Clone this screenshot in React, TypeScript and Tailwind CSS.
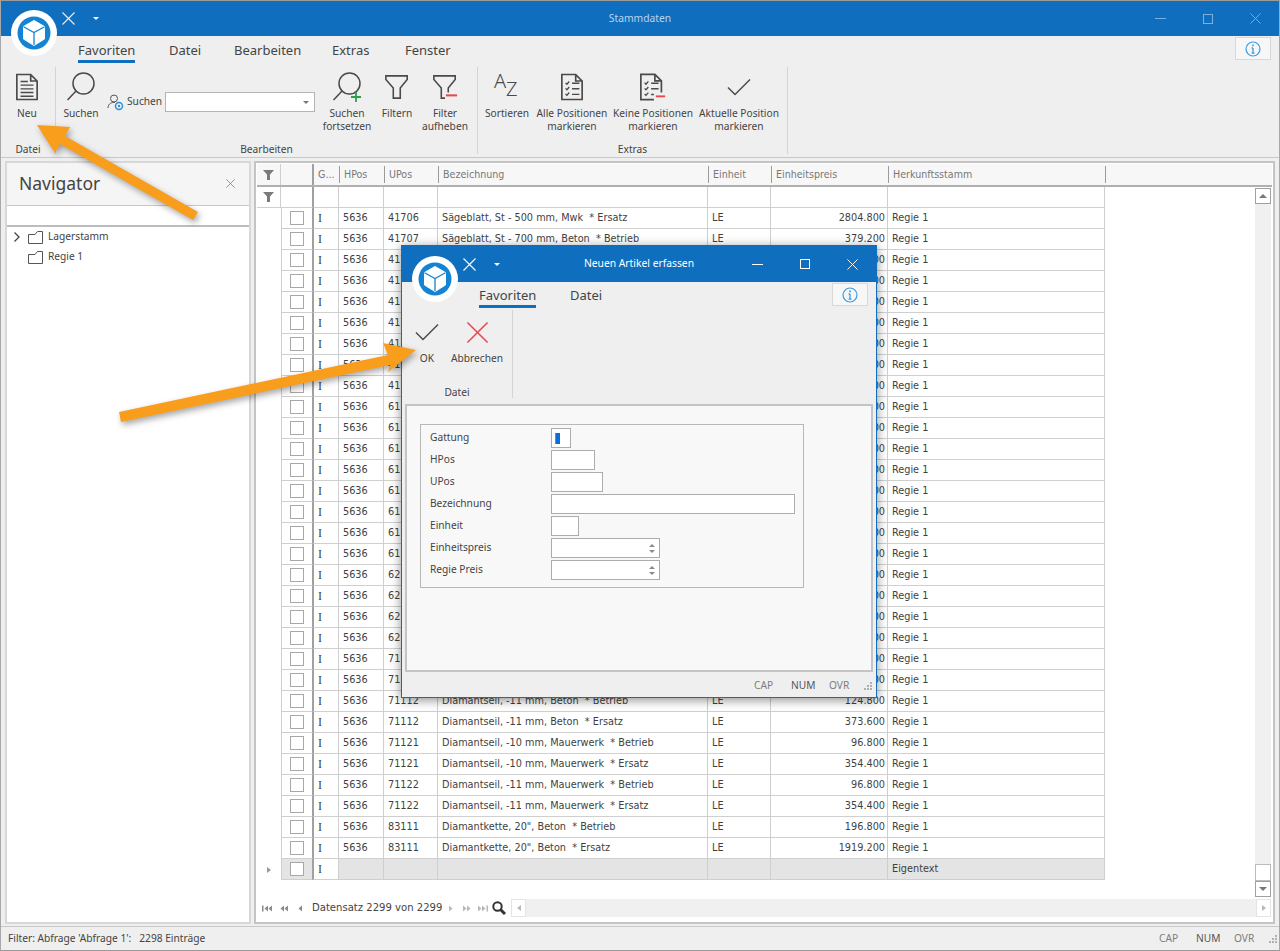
import type { ReactNode } from "react"

const ui = "font-['Noto_Sans',sans-serif]"
const gridFont = "font-['DejaVu_Sans_Condensed','DejaVu_Sans',sans-serif]"

type Row = { upos: string; name: string; price: string }

const rows: Row[] = [
 { upos: "41706", name: "Sägeblatt, St - 500 mm, Mwk  * Ersatz", price: "2804.800" },
 { upos: "41707", name: "Sägeblatt, St - 700 mm, Beton  * Betrieb", price: "379.200" },
 { upos: "41707", name: "Sägeblatt, St - 700 mm, Beton  * Ersatz", price: "3312.000" },
 { upos: "41708", name: "Sägeblatt, St - 700 mm, Mwk  * Betrieb", price: "379.200" },
 { upos: "41708", name: "Sägeblatt, St - 700 mm, Mwk  * Ersatz", price: "3312.000" },
 { upos: "41709", name: "Sägeblatt, St - 900 mm, Beton  * Betrieb", price: "504.800" },
 { upos: "41709", name: "Sägeblatt, St - 900 mm, Beton  * Ersatz", price: "4416.000" },
 { upos: "41710", name: "Sägeblatt, St - 900 mm, Mwk  * Betrieb", price: "504.800" },
 { upos: "41710", name: "Sägeblatt, St - 900 mm, Mwk  * Ersatz", price: "4416.000" },
 { upos: "61101", name: "Bohrkrone, 50 mm, Beton  * Betrieb", price: "44.800" },
 { upos: "61101", name: "Bohrkrone, 50 mm, Beton  * Ersatz", price: "128.000" },
 { upos: "61102", name: "Bohrkrone, 80 mm, Beton  * Betrieb", price: "62.400" },
 { upos: "61102", name: "Bohrkrone, 80 mm, Beton  * Ersatz", price: "176.000" },
 { upos: "61103", name: "Bohrkrone, 100 mm, Beton  * Betrieb", price: "78.400" },
 { upos: "61103", name: "Bohrkrone, 100 mm, Beton  * Ersatz", price: "232.000" },
 { upos: "61104", name: "Bohrkrone, 150 mm, Beton  * Betrieb", price: "104.800" },
 { upos: "61104", name: "Bohrkrone, 150 mm, Beton  * Ersatz", price: "304.000" },
 { upos: "62101", name: "Bohrkrone, 200 mm, Beton  * Betrieb", price: "136.800" },
 { upos: "62101", name: "Bohrkrone, 200 mm, Beton  * Ersatz", price: "392.000" },
 { upos: "62102", name: "Bohrkrone, 250 mm, Beton  * Betrieb", price: "168.800" },
 { upos: "62102", name: "Bohrkrone, 250 mm, Beton  * Ersatz", price: "488.000" },
 { upos: "71111", name: "Diamantseil, -10 mm, Beton  * Betrieb", price: "116.800" },
 { upos: "71111", name: "Diamantseil, -10 mm, Beton  * Ersatz", price: "352.000" },
 { upos: "71112", name: "Diamantseil, -11 mm, Beton  * Betrieb", price: "124.800" },
 { upos: "71112", name: "Diamantseil, -11 mm, Beton  * Ersatz", price: "373.600" },
 { upos: "71121", name: "Diamantseil, -10 mm, Mauerwerk  * Betrieb", price: "96.800" },
 { upos: "71121", name: "Diamantseil, -10 mm, Mauerwerk  * Ersatz", price: "354.400" },
 { upos: "71122", name: "Diamantseil, -11 mm, Mauerwerk  * Betrieb", price: "96.800" },
 { upos: "71122", name: "Diamantseil, -11 mm, Mauerwerk  * Ersatz", price: "354.400" },
 { upos: "83111", name: "Diamantkette, 20\", Beton  * Betrieb", price: "196.800" },
 { upos: "83111", name: "Diamantkette, 20\", Beton  * Ersatz", price: "1919.200" }
]

const Logo = () => (
 <svg width="46" height="46" viewBox="0 0 46 46">
  <circle cx="23" cy="23" r="23" fill="#ffffff" />
  <circle cx="23" cy="23" r="16.5" fill="#1583d3" />
  <path d="M23 10.5 L33.5 16.5 V29 L23 35.5 L12.5 29 V16.5 Z" fill="#ffffff" stroke="#ffffff" strokeLinejoin="round" />
  <path d="M12.5 16.8 L23 22.5 L33.5 16.8 M23 22.5 V35" fill="none" stroke="#1583d3" strokeWidth="1.3" />
 </svg>
)

const CloseGlyph = ({ color = "#ffffff", size = 13 }: { color?: string; size?: number }) => (
 <svg width={size} height={size} viewBox="0 0 13 13" stroke={color} strokeWidth="1.1" fill="none">
  <path d="M0.5 0.5 L12.5 12.5 M12.5 0.5 L0.5 12.5" />
 </svg>
)

const Caret = () => <span className="w-0 h-0 border-x-[3.5px] border-x-transparent border-t-[3px] border-t-white" />

const Doc = ({ children }: { children: ReactNode }) => (
 <svg width="24" height="28" viewBox="0 0 26 30" fill="none" stroke="#4a4a4a" strokeWidth="1.8">
  <path d="M2 1.5 H17 L24 8.5 V28.5 H2 Z M17 1.5 V8.5 H24" />
  {children}
 </svg>
)

const NewIcon = () => (
 <Doc>
  <path d="M6 9 H14 M6 13 H20 M6 17 H20 M6 21 H20 M6 25 H20" strokeWidth="1.5" />
 </Doc>
)

const checks = "M6 10.5 l1.5 1.5 l2.5 -3 M6 16.5 l1.5 1.5 l2.5 -3 M6 22.5 l1.5 1.5 l2.5 -3"

const CheckAllIcon = () => (
 <Doc>
  <path d={checks} strokeWidth="1.4" />
  <path d="M13 11 H21 M13 17 H21 M13 23 H21" strokeWidth="1.6" />
 </Doc>
)

const CheckNoneIcon = () => (
 <svg width="28" height="28" viewBox="0 0 30 30" fill="none" stroke="#4a4a4a" strokeWidth="1.8">
  <path d="M24 21 V8.5 L17 1.5 H2 V28.5 H16 M17 1.5 V8.5 H24" />
  <path d={checks} strokeWidth="1.4" />
  <path d="M13 11 H21 M13 17 H21 M13 23 H16" strokeWidth="1.6" />
  <path d="M18 25 H28" stroke="#e8474c" strokeWidth="2" />
 </svg>
)

const SearchIcon = ({ plus = false }: { plus?: boolean }) => (
 <svg width="30" height="30" viewBox="0 0 30 30" fill="none" stroke="#4a4a4a" strokeWidth="1.5">
  <circle cx="17.5" cy="11.5" r="10.5" />
  <path d="M10.5 18.5 L1.5 28" />
  {plus && <path d="M24 20 V30 M19 25 H29" stroke="#2f9e4f" strokeWidth="1.8" />}
 </svg>
)

const FilterIcon = ({ minus = false }: { minus?: boolean }) => (
 <svg width="26" height="26" viewBox="0 0 28 28" fill="none" stroke="#4a4a4a" strokeWidth="1.7">
  {minus ? (
   <>
    <path d="M17.5 20 V15 L25 6 V2 H2 V6 L10 15 V26 H14" />
    <path d="M15 23 H27" stroke="#e8474c" strokeWidth="2.2" />
   </>
  ) : (
   <path d="M2 2 H25 V6 L17.5 15 V26 H10 V15 L2 6 Z" />
  )}
 </svg>
)

const SortIcon = () => (
 <div className={`relative w-[26px] h-[26px] text-[#4a4a4a] ${ui}`}>
  <span className="absolute left-0 top-[-5px] text-[20px] leading-[24px] font-light">A</span>
  <span className="absolute left-[12px] top-[3px] text-[20px] leading-[24px] font-light">Z</span>
 </div>
)

const CheckIcon = ({ width = 24 }: { width?: number }) => (
 <svg width={width} height={width * 0.75} viewBox="0 0 24 18" fill="none" stroke="#4a4a4a" strokeWidth="1.5">
  <path d="M1 9.5 L8 16.5 L23 1.5" />
 </svg>
)

const CancelIcon = () => (
 <svg width="23" height="23" viewBox="0 0 24 24" fill="none" stroke="#e8474c" strokeWidth="1.6">
  <path d="M1.5 1.5 L22.5 22.5 M22.5 1.5 L1.5 22.5" />
 </svg>
)

const InfoIcon = () => (
 <svg width="16" height="16" viewBox="0 0 16 16" fill="none" stroke="#3b9be0" strokeWidth="1.2">
  <circle cx="8" cy="8" r="7" />
  <path d="M8 7 V12.2 M6.6 12.2 H9.6 M6.6 7 H8" strokeWidth="1.3" />
  <path d="M8 3.6 V5.2" strokeWidth="1.6" />
 </svg>
)

const Folder = () => (
 <svg width="15" height="13" viewBox="0 0 15 13" fill="none" stroke="#555555" strokeWidth="1">
  <path d="M0.5 3.5 H7 L9.5 0.5 H14.5 V12.5 H0.5 Z" />
 </svg>
)

const Funnel = () => (
 <svg width="11" height="10" viewBox="0 0 11 10" fill="#7a7a7a">
  <path d="M0 0 H11 L7 4.5 V10 H4 V4.5 Z" />
 </svg>
)

// pager arrows: n triangles with an optional end bar
const Pager = ({ back, n, bar, color, className }: { back?: boolean; n: number; bar?: boolean; color: string; className?: string }) => {
 const width = n * 4 + (bar ? 2 : 0)
 return (
  <svg width={width} height="7" viewBox={`0 0 ${width} 7`} fill={color} className={`shrink-0 ${back ? "-scale-x-100" : ""} ${className ?? ""}`}>
   {Array.from({ length: n }).map((_, i) => (
    <path key={i} d={`M${i * 4} 0.5 L${i * 4 + 3.5} 3.5 L${i * 4} 6.5 Z`} />
   ))}
   {bar && <rect x={width - 1.5} y="0.5" width="1.5" height="6" />}
  </svg>
 )
}

const TitleBar = ({ title, dim }: { title: string; dim?: boolean }) => {
 const glyph = dim ? "#7fb0dd" : "#ffffff"
 return (
  <div className={`grid grid-cols-[1fr_auto_1fr] items-center shrink-0 bg-[#106ebe] ${dim ? "h-[35px]" : "h-[36px]"} ${ui}`}>
   <div className="flex items-center pl-[61px] gap-[18px]">
    <CloseGlyph color={dim ? "#e6f0f9" : "#ffffff"} />
    <Caret />
   </div>
   <span className={`text-[10.3px] ${dim ? "text-[#b9d3ec]" : "text-white"}`}>{title}</span>
   <div className={`flex items-center justify-end ${dim ? "gap-[37px] pr-[18px]" : "gap-[37px] pr-[18px]"}`}>
    <span className="w-[11px] h-px" style={{ backgroundColor: glyph }} />
    <span className="w-[10px] h-[10px] border" style={{ borderColor: glyph }} />
    <CloseGlyph color={glyph} size={11} />
   </div>
  </div>
 )
}

const Tabs = ({ tabs, offset, tall }: { tabs: { label: string; w: number }[]; offset: string; tall?: boolean }) => (
 <div className={`relative flex items-start shrink-0 text-[13px] text-[#444444] ${tall ? "h-[28px] pt-[5px]" : "h-[27px] pt-[4px]"} ${ui} ${offset}`}>
  {tabs.map((t, i) => (
   <div key={t.label} style={{ width: t.w }}>
    <span className={`inline-block leading-[19px] ${i === 0 ? "border-b-[3px] border-[#106ebe]" : ""}`}>{t.label}</span>
   </div>
  ))}
  <div className={`absolute right-[8px] w-[36px] h-[23px] flex items-center justify-center bg-[#f7f7f7] border border-[#d8d8d8] ${tall ? "top-[1px]" : "top-px"}`}>
   <InfoIcon />
  </div>
 </div>
)

const RibbonButton = ({ w, icon, label }: { w: number; icon: ReactNode; label: ReactNode }) => (
 <div className="flex flex-col items-center shrink-0" style={{ width: w }}>
  <div className="h-[40px] flex items-center justify-center">{icon}</div>
  <div className="text-center leading-[13px] whitespace-nowrap">{label}</div>
 </div>
)

const Group = ({ w, label, children }: { w: number; label: string; children: ReactNode }) => (
 <div className="flex flex-col h-[87px] border-r border-[#d4d4d4] shrink-0" style={{ width: w }}>
  <div className="flex">{children}</div>
  <div className="mt-auto mb-[-2px] text-center leading-[13px]">{label}</div>
 </div>
)

const Ribbon = () => (
 <div className={`flex h-[94px] pt-[3px] shrink-0 border-b border-[#c8c8c8] text-[10.2px] text-[#444444] ${ui}`}>
  <Group w={55} label="Datei">
   <RibbonButton w={52} icon={<NewIcon />} label="Neu" />
  </Group>
  <Group w={422} label="Bearbeiten">
   <RibbonButton w={50} icon={<SearchIcon />} label="Suchen" />
   <div className="w-[216px] shrink-0 flex items-center h-[20px] mt-[25px] pl-[1px]">
    <svg width="17" height="17" viewBox="0 0 17 17" fill="none" stroke="#555555" strokeWidth="1">
     <circle cx="7" cy="4.5" r="3.5" />
     <path d="M1 14 C1 9.5 5 8 8 8.5" />
     <circle cx="12" cy="12" r="3.5" stroke="#2f8fd8" strokeWidth="1.5" />
     <circle cx="12" cy="12" r="1.2" fill="#2f8fd8" stroke="none" />
    </svg>
    <span className="ml-[3px] w-[38px]">Suchen</span>
    <div className="w-[150px] h-[20px] bg-white border border-[#b4b4b4] flex items-center justify-end pr-[5px]">
     <span className="w-0 h-0 border-x-[3px] border-x-transparent border-t-[3px] border-t-[#777777]" />
    </div>
   </div>
   <RibbonButton w={50} icon={<SearchIcon plus />} label={<>Suchen<br />fortsetzen</>} />
   <RibbonButton w={50} icon={<FilterIcon />} label="Filtern" />
   <RibbonButton w={46} icon={<FilterIcon minus />} label={<>Filter<br />aufheben</>} />
  </Group>
  <Group w={310} label="Extras">
   <div className="w-[4px]" />
   <RibbonButton w={50} icon={<SortIcon />} label="Sortieren" />
   <RibbonButton w={80} icon={<CheckAllIcon />} label={<>Alle Positionen<br />markieren</>} />
   <RibbonButton w={82} icon={<CheckNoneIcon />} label={<>Keine Positionen<br />markieren</>} />
   <RibbonButton w={90} icon={<CheckIcon />} label={<>Aktuelle Position<br />markieren</>} />
  </Group>
 </div>
)

const columns = [
 { label: "G...", w: "w-[27px]" },
 { label: "HPos", w: "w-[45px]" },
 { label: "UPos", w: "w-[54px]" },
 { label: "Bezeichnung", w: "w-[270px]" },
 { label: "Einheit", w: "w-[63px]" },
 { label: "Einheitspreis", w: "w-[117px]" },
 { label: "Herkunftsstamm", w: "w-[217px]" }
]

const cell = "h-full shrink-0 border-r border-b border-[#cfcfcf] px-[4px] flex items-center whitespace-nowrap overflow-hidden"

const CheckCell = ({ shaded }: { shaded?: boolean }) => (
 <div className={`w-[31px] h-full shrink-0 border-l border-b border-[#cfcfcf] flex items-center justify-center ${shaded ? "bg-[#e4e4e4]" : ""}`}>
  <span className="w-[14px] h-[14px] bg-white border border-[#a8a8a8]" />
 </div>
)

const GCell = () => (
 <div className={`${cell} w-[27px] bg-white border-l-2 border-l-[#a0a0a0] font-['Liberation_Serif',serif] text-[12px] font-light`}>I</div>
)

const DataRow = ({ row }: { row: Row }) => (
 <div className="flex h-[21px]">
  <div className="w-[24px] shrink-0" />
  <CheckCell />
  <GCell />
  <div className={`${cell} w-[45px]`}>5636</div>
  <div className={`${cell} w-[54px]`}>{row.upos}</div>
  <div className={`${cell} w-[270px] whitespace-pre`}>{row.name}</div>
  <div className={`${cell} w-[63px]`}>LE</div>
  <div className={`${cell} w-[117px] justify-end pr-[2px]`}>{row.price}</div>
  <div className={`${cell} w-[217px]`}>Regie 1</div>
 </div>
)

const Grid = () => (
 <div className={`flex-1 min-w-0 flex flex-col border-2 border-[#c4c4c4] p-[1px] bg-white text-[10.8px] text-[#3f3f3f] ${gridFont}`}>
  <div className="flex h-[23px] shrink-0 bg-[#f7f7f7] border-b-2 border-[#b0b0b0] text-[10.6px]">
   <div className="w-[24px] shrink-0 flex items-center justify-center border-r border-[#cfcfcf]"><Funnel /></div>
   <div className="w-[31px] shrink-0" />
   {columns.map((c, i) => (
    <div key={c.label} className={`${c.w} shrink-0 flex items-center px-[4px] text-[#777777] ${i === 0 ? "border-l-2 border-[#a0a0a0]" : "border-l border-[#9a9a9a] my-[2px]"}`}>
     {c.label}
    </div>
   ))}
   <div className="flex-1 border-l border-[#9a9a9a] my-[2px]" />
  </div>
  <div className="flex-1 flex min-h-0">
   <div className="w-[848px] shrink-0 border-r border-[#cfcfcf] self-start">
    <div className="flex h-[21px]">
     <div className="w-[24px] shrink-0 flex items-center justify-center border-b border-r border-[#cfcfcf]"><Funnel /></div>
     <div className="w-[31px] shrink-0 border-b border-[#cfcfcf]" />
     {columns.map((c, i) => (
      <div key={c.label} className={`${c.w} h-full shrink-0 border-b border-r border-[#cfcfcf] ${i === 0 ? "border-l-2 border-l-[#a0a0a0]" : ""}`} />
     ))}
    </div>
    {rows.map((row, i) => <DataRow key={i} row={row} />)}
    <div className="flex h-[21px]">
     <div className="w-[24px] shrink-0 flex items-center justify-center">
      <span className="w-0 h-0 border-y-[3.5px] border-y-transparent border-l-[4px] border-l-[#999999]" />
     </div>
     <CheckCell shaded />
     <GCell />
     <div className={`${cell} w-[45px] bg-[#e4e4e4]`} />
     <div className={`${cell} w-[54px] bg-[#e4e4e4]`} />
     <div className={`${cell} w-[270px] bg-[#e4e4e4]`} />
     <div className={`${cell} w-[63px] bg-[#e4e4e4]`} />
     <div className={`${cell} w-[117px] bg-[#e4e4e4]`} />
     <div className={`${cell} w-[217px] bg-[#e4e4e4]`}>Eigentext</div>
    </div>
   </div>
   <div className="flex-1" />
   <div className="w-[16px] shrink-0 mr-[1px] bg-[#f0f0f0] flex flex-col mt-[1px] mb-[1px]">
    <div className="h-[16px] bg-white border border-[#a0a0a0] flex items-center justify-center">
     <span className="w-0 h-0 border-x-[4px] border-x-transparent border-b-[4px] border-b-[#777777]" />
    </div>
    <div className="flex-1" />
    <div className="h-[17px] bg-white border border-[#bcbcbc]" />
    <div className="h-[16px] bg-white border border-[#a0a0a0] flex items-center justify-center">
     <span className="w-0 h-0 border-x-[4px] border-x-transparent border-t-[4px] border-t-[#777777]" />
    </div>
   </div>
  </div>
  <div className="flex items-center h-[20px] shrink-0 text-[#444444] pl-[5px] mb-[3px] whitespace-nowrap">
   <Pager back n={2} bar color="#8a8a8a" />
   <Pager back n={2} color="#8a8a8a" className="ml-[8px]" />
   <Pager back n={1} color="#8a8a8a" className="ml-[10px]" />
   <span className="ml-[10px] w-[137px] shrink-0 text-[11.2px]">Datensatz 2299 von 2299</span>
   <Pager n={1} color="#b8b8b8" />
   <Pager n={2} color="#b8b8b8" className="ml-[10px]" />
   <Pager n={2} bar color="#b8b8b8" className="ml-[7px]" />
   <svg width="14" height="14" viewBox="0 0 14 14" fill="none" stroke="#333333" strokeWidth="2" className="ml-[4px] mr-[5px] shrink-0">
    <circle cx="5.5" cy="5.5" r="4.2" />
    <path d="M8.5 8.5 L13 13" strokeWidth="3" />
   </svg>
   <div className="flex-1 h-[18px] mr-[1px] bg-[#f0f0f0] flex justify-between">
    <div className="w-[15px] h-full bg-white border border-[#e4e4e4] flex items-center justify-center">
     <span className="w-0 h-0 border-y-[3.5px] border-y-transparent border-r-[4px] border-r-[#b8b8b8]" />
    </div>
    <div className="w-[15px] h-full bg-white border border-[#e4e4e4] flex items-center justify-center">
     <span className="w-0 h-0 border-y-[3.5px] border-y-transparent border-l-[4px] border-l-[#b8b8b8]" />
    </div>
   </div>
  </div>
 </div>
)

const Navigator = () => (
 <div className={`w-[246px] shrink-0 flex flex-col border-2 border-[#d8d8d8] bg-white ${ui}`}>
  <div className="flex items-center justify-between h-[43px] shrink-0 bg-[#f5f5f5] pl-[12px] pr-[14px] pb-[2px] border-b border-[#c8c8c8]">
   <span className="text-[17.5px] text-[#444444]">Navigator</span>
   <CloseGlyph color="#7a7a7a" size={9} />
  </div>
  <div className="h-[21px] shrink-0 border-b-2 border-[#bdbdbd]" />
  <div className="flex flex-col text-[10.2px] text-[#444444]">
   <div className="flex items-center h-[20px]">
    <svg width="6" height="10" viewBox="0 0 6 10" fill="none" stroke="#444444" strokeWidth="1.3" className="ml-[7px] mr-[8px]">
     <path d="M0.5 0.5 L5 5 L0.5 9.5" />
    </svg>
    <Folder />
    <span className="ml-[5px]">Lagerstamm</span>
   </div>
   <div className="flex items-center h-[20px] pl-[21px]">
    <Folder />
    <span className="ml-[5px]">Regie 1</span>
   </div>
  </div>
 </div>
)

const StatusKeys = ({ right }: { right: string }) => (
 <div className={`flex items-center ${right}`}>
  <span className="text-[#7e7e7e] w-[37px]">CAP</span>
  <span className="text-[#555555] w-[38px]">NUM</span>
  <span className="text-[#7e7e7e] w-[27px]">OVR</span>
  <svg width="10" height="10" viewBox="0 0 10 10" fill="#b0b0b0" className="ml-[7px]">
   <rect x="7" y="1" width="2" height="2" />
   <rect x="4" y="4" width="2" height="2" />
   <rect x="7" y="4" width="2" height="2" />
   <rect x="1" y="7" width="2" height="2" />
   <rect x="4" y="7" width="2" height="2" />
   <rect x="7" y="7" width="2" height="2" />
  </svg>
 </div>
)

const fields = [
 { label: "Gattung", w: "w-[20px]", value: true },
 { label: "HPos", w: "w-[44px]" },
 { label: "UPos", w: "w-[52px]" },
 { label: "Bezeichnung", w: "w-[244px]" },
 { label: "Einheit", w: "w-[28px]" },
 { label: "Einheitspreis", w: "w-[109px]", spin: true },
 { label: "Regie Preis", w: "w-[109px]", spin: true }
]

const Dialog = () => (
 <div className={`absolute left-[400px] top-[244px] w-[476px] h-[453px] flex flex-col bg-[#efefef] border border-[#106ebe] shadow-[0_2px_10px_rgba(0,0,0,0.45)] ${ui}`}>
  <TitleBar title="Neuen Artikel erfassen" />
  <div className="absolute left-[10px] top-[10px]"><Logo /></div>
  <Tabs tabs={[{ label: "Favoriten", w: 91 }, { label: "Datei", w: 60 }]} offset="pl-[77px]" />
  <div className="flex h-[91px] shrink-0 pt-[1px] text-[10.2px] text-[#444444]">
   <div className="flex flex-col w-[111px] h-[88px] border-r border-[#d4d4d4]">
    <div className="flex pt-[2px]">
     <RibbonButton w={50} icon={<CheckIcon />} label="OK" />
     <RibbonButton w={50} icon={<CancelIcon />} label="Abbrechen" />
    </div>
    <div className="mt-auto mb-[-1px] text-center leading-[13px]">Datei</div>
   </div>
  </div>
  <div className="flex-1 mx-[3px] mt-[4px] border-2 border-[#c4c4c4] bg-[#f8f8f8] pt-[18px] pl-[13px]">
   <div className="w-[384px] h-[164px] border border-[#b8b8b8] pt-[2px] pl-[9px] flex flex-col text-[10.2px] text-[#444444]">
    {fields.map(f => (
     <div key={f.label} className="flex items-center h-[22px] shrink-0">
      <span className="w-[121px]">{f.label}</span>
      <div className={`${f.w} h-[20px] bg-white border border-[#acacac] flex items-center justify-end`}>
       {f.value && (
        <span className="w-full pl-[3px] flex">
         <span className="w-[1px] h-[11px] bg-[#c9772a]" />
         <span className="w-[4px] h-[11px] bg-[#0a6fd8]" />
        </span>
       )}
       {f.spin && (
        <span className="flex flex-col gap-[3px] pr-[4px]">
         <span className="w-0 h-0 border-x-[3px] border-x-transparent border-b-[3px] border-b-[#8a8a8a]" />
         <span className="w-0 h-0 border-x-[3px] border-x-transparent border-t-[3px] border-t-[#8a8a8a]" />
        </span>
       )}
      </div>
     </div>
    ))}
   </div>
  </div>
  <div className="h-[25px] shrink-0 flex items-center justify-end pt-[3px] text-[10.2px]">
   <StatusKeys right="pr-[3px]" />
  </div>
 </div>
)

export default function App() {
 return (
  <div className="relative w-[1280px] h-[951px] overflow-hidden flex flex-col bg-[#efefef] border border-t-[#9a9a9a] border-x-[#a8a8a8] border-b-[#9a9a9a]">
   <TitleBar title="Stammdaten" dim />
   <Tabs
    tall
    tabs={[
     { label: "Favoriten", w: 91 },
     { label: "Datei", w: 65 },
     { label: "Bearbeiten", w: 98 },
     { label: "Extras", w: 73 },
     { label: "Fenster", w: 60 }
    ]}
    offset="pl-[77px]"
   />
   <Ribbon />
   <div className="flex-1 min-h-0 flex gap-[3px] px-[4px] pt-[3px] pb-[2px] border-b border-[#c8c8c8]">
    <Navigator />
    <Grid />
   </div>
   <div className={`h-[23px] shrink-0 flex items-center justify-between pl-[7px] pt-px text-[10.2px] text-[#444444] ${ui}`}>
    <span className="whitespace-pre">Filter: Abfrage 'Abfrage 1':   2298 Einträge</span>
    <StatusKeys right="pr-[1px]" />
   </div>

   <div className="absolute left-[10px] top-[9px]"><Logo /></div>
   <Dialog />
   <svg width="1280" height="951" className="absolute left-[-1px] top-[-1px] pointer-events-none drop-shadow-[2px_3px_3px_rgba(0,0,0,0.35)]">
    <path d="M37 125 L70 127 L65 136 L198 212 L193 220 L60 144 L55 153 Z" fill="#f99d1c" />
    <path d="M416 350 L383 343 L388 355 L119 412 L121 422 L390 365 L388 372 Z" fill="#f99d1c" />
   </svg>
  </div>
 )
}
